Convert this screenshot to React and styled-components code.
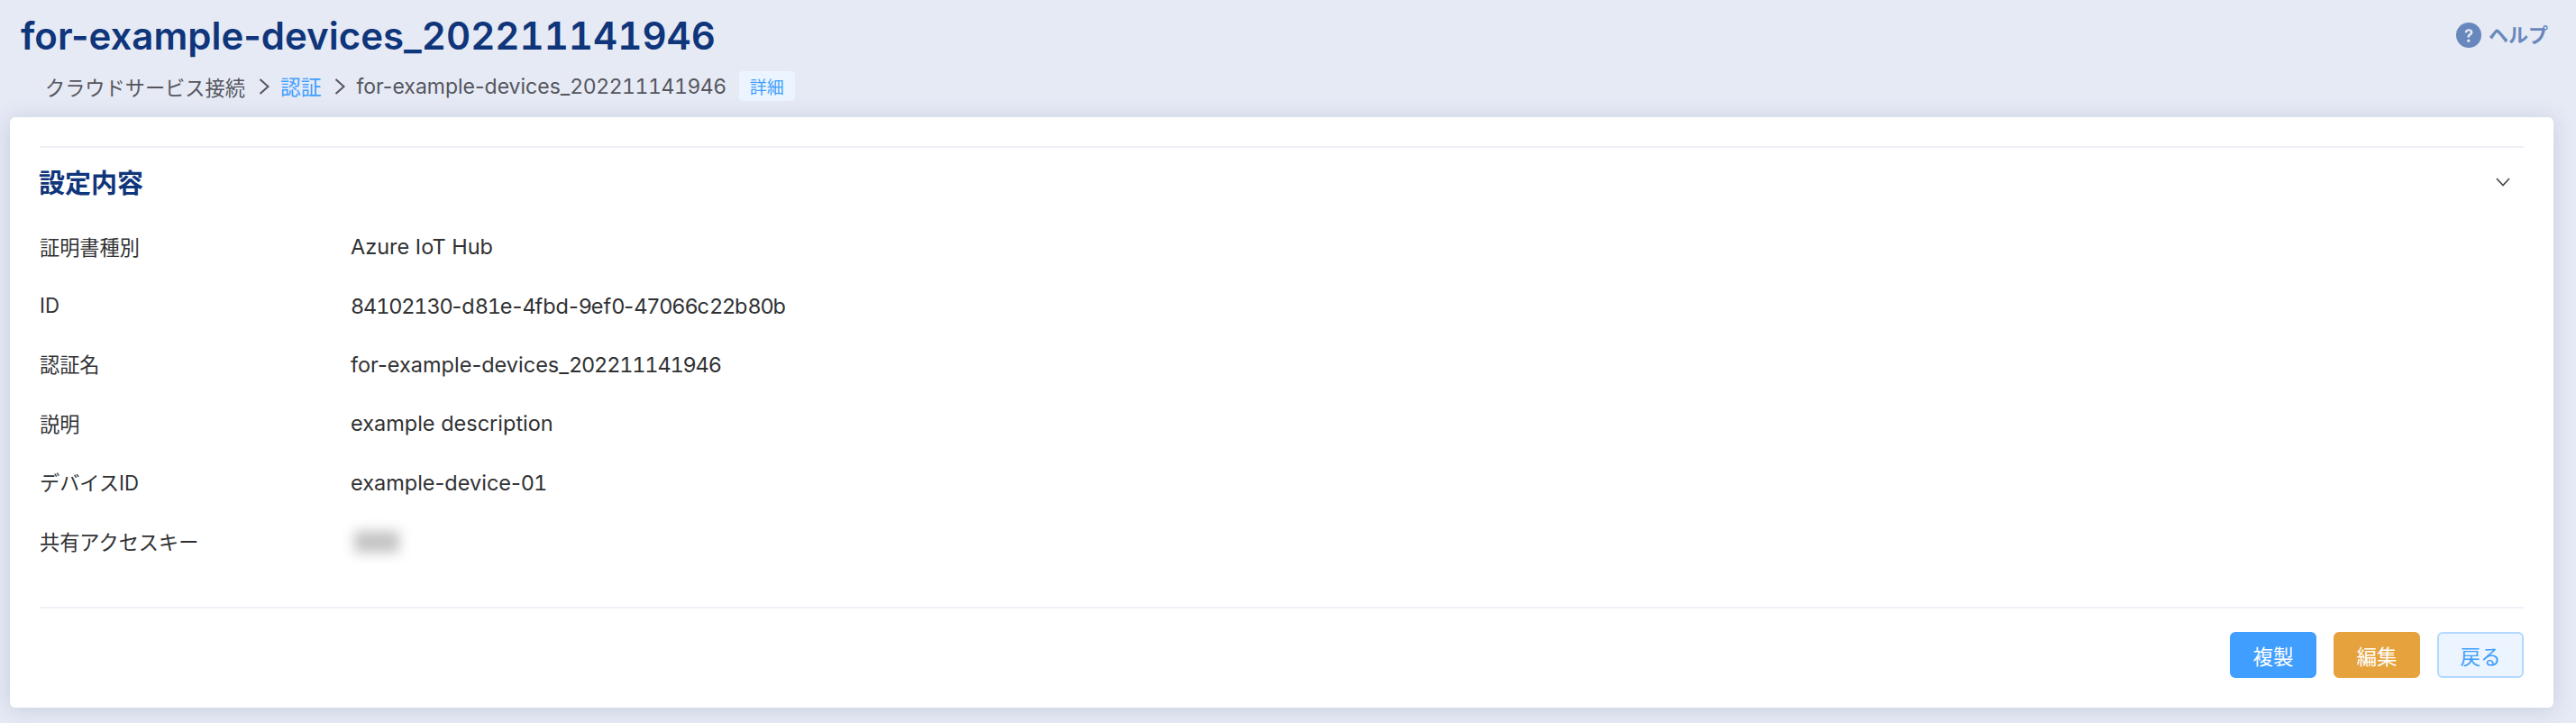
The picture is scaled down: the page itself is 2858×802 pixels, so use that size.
import React from "react";
import styled, { createGlobalStyle } from "styled-components";

const GlobalStyle = createGlobalStyle`
  html, body {
    margin: 0;
    padding: 0;
    background: #e6eaf5;
  }
  body {
    font-family: Inter, "Noto Sans CJK JP", sans-serif;
  }
`;

const Digits = styled.span`
  font-feature-settings: "tnum";
`;

const Page = styled.div`
  width: 2858px;
  height: 802px;
  box-sizing: border-box;
  padding: 0 25px 17px 11px;
  display: flex;
  flex-direction: column;
  overflow: hidden;
`;

const Header = styled.header`
  height: 130px;
  flex: none;
`;

const TopRow = styled.div`
  display: flex;
  justify-content: space-between;
  align-items: flex-start;
  padding: 14px 0 0 12px;
`;

const Title = styled.h1`
  margin: 0;
  font-size: 42px;
  line-height: 52px;
  font-weight: 600;
  color: #0f357b;
`;

const Help = styled.a`
  display: flex;
  align-items: center;
  gap: 8px;
  margin: 11px 6px 0 0;
  font-size: 22px;
  line-height: 28px;
  font-weight: 700;
  color: #6887bc;
`;

const Crumbs = styled.nav`
  display: flex;
  align-items: center;
  margin: 13px 0 0 39px;
  height: 33px;
  color: #55565e;
`;

const CrumbText = styled.span`
  font-size: 22.2px;
`;

const CrumbCurrent = styled.span`
  font-size: 23px;

  ${Digits} {
    letter-spacing: -0.02em;
  }
`;

const CrumbLink = styled.a`
  font-size: 22.8px;
  color: #409eff;
`;

const Separator = styled.svg`
  width: 12px;
  height: 18px;
  margin: 0 12px 0 15px;
  flex: none;
`;

const Badge = styled.span`
  display: flex;
  align-items: center;
  justify-content: center;
  width: 62px;
  height: 33px;
  margin-left: 14px;
  border-radius: 4px;
  background: #ecf5ff;
  color: #409eff;
  font-size: 19px;
`;

const Card = styled.main`
  flex: 1;
  box-sizing: border-box;
  padding: 32px 33px 33px;
  background: #fff;
  border-radius: 6px;
  box-shadow: 0 2px 24px rgba(70, 90, 130, 0.2);
  display: flex;
  flex-direction: column;
`;

const Divider = styled.hr`
  margin: 0;
  border: 0;
  border-top: 2px solid #edf1f7;
  flex: none;
`;

const SectionHead = styled.div`
  display: flex;
  align-items: center;
  justify-content: space-between;
  height: 76px;
  padding-right: 15px;
`;

const SectionTitle = styled.h2`
  margin: -2px 0 0 -1px;
  font-size: 29px;
  font-weight: 700;
  color: #0f357b;
`;

const Rows = styled.dl`
  margin: 0;
  flex: 1;
`;

const Row = styled.div`
  display: grid;
  grid-template-columns: 345px 1fr;
  align-items: center;
  height: 65.4px;
`;

const Label = styled.dt`
  font-size: 22.2px;
  color: #303133;
`;

const Value = styled.dd`
  margin: 0;
  padding-top: 2px;
  font-size: 23.5px;
  color: #303133;

  ${Digits} {
    letter-spacing: -0.05em;
  }
`;

const Blurred = styled.span`
  display: block;
  width: 50px;
  height: 24px;
  margin-left: 4px;
  background: #c4c4c4;
  filter: blur(7px);
`;

const Actions = styled.div`
  display: flex;
  justify-content: flex-end;
  gap: 19px;
  padding-top: 26px;
`;

const Button = styled.button`
  width: 96px;
  height: 51px;
  box-sizing: border-box;
  padding: 0;
  border-radius: 6px;
  border: 2px solid ${(d) => d.$border};
  background: ${(d) => d.$bg};
  color: ${(d) => d.$color};
  font-family: inherit;
  font-size: 22.5px;
`;

const rows = [
  ["証明書種別", "Azure IoT Hub"],
  ["ID", "84102130-d81e-4fbd-9ef0-47066c22b80b"],
  ["認証名", "for-example-devices_202211141946"],
  ["説明", "example description"],
  ["デバイスID", "example-device-01"],
];

// digits are tabular in the reference, the hyphens around them are not
const withDigits = (text) =>
  text.split(/(\d+)/).map((part, i) => (i % 2 ? <Digits key={i}>{part}</Digits> : part));

const Chevron = () => (
  <Separator viewBox="0 0 12 18" fill="none" stroke="#55565e" strokeWidth="2">
    <path d="M1.500 1 L10.500 9 L1.500 17" />
  </Separator>
);

export default function App() {
  return (
    <Page>
      <GlobalStyle />
      <Header>
        <TopRow>
          <Title>{withDigits("for-example-devices_202211141946")}</Title>
          <Help>
            <svg width="28" height="28" viewBox="0 0 28 28">
              <circle cx="14" cy="14" r="14" fill="#6887bc" />
              <path
                d="M9.6 11.2c.2-2.6 2-4 4.500-4 2.500 0 4.300 1.400 4.300 3.600 0 1.700-.9 2.600-2.100 3.400-1 .7-1.300 1.100-1.300 2.200h-2.500c0-1.900.5-2.800 1.900-3.800.9-.6 1.400-1.100 1.400-1.800 0-.9-.7-1.500-1.700-1.500-1.100 0-1.800.7-1.900 1.900z"
                fill="#e6eaf5"
              />
              <circle cx="13.800" cy="20.200" r="1.600" fill="#e6eaf5" />
            </svg>
            ヘルプ
          </Help>
        </TopRow>
        <Crumbs>
          <CrumbText>クラウドサービス接続</CrumbText>
          <Chevron />
          <CrumbLink>認証</CrumbLink>
          <Chevron />
          <CrumbCurrent>{withDigits("for-example-devices_202211141946")}</CrumbCurrent>
          <Badge>詳細</Badge>
        </Crumbs>
      </Header>
      <Card>
        <Divider />
        <SectionHead>
          <SectionTitle>設定内容</SectionTitle>
          <svg width="16" height="10" viewBox="0 0 16 10" fill="none" stroke="#444" strokeWidth="1.6">
            <path d="M1 1 L8 8.500 L15 1" />
          </svg>
        </SectionHead>
        <Rows>
          {rows.map(([label, value]) => (
            <Row key={label}>
              <Label>{label}</Label>
              <Value>{withDigits(value)}</Value>
            </Row>
          ))}
          <Row>
            <Label>共有アクセスキー</Label>
            <Value>
              <Blurred />
            </Value>
          </Row>
        </Rows>
        <Divider />
        <Actions>
          <Button $bg="#409eff" $border="#409eff" $color="#fff">複製</Button>
          <Button $bg="#e6a23c" $border="#e6a23c" $color="#fff">編集</Button>
          <Button $bg="#ecf5ff" $border="#b3d8ff" $color="#409eff">戻る</Button>
        </Actions>
      </Card>
    </Page>
  );
}
